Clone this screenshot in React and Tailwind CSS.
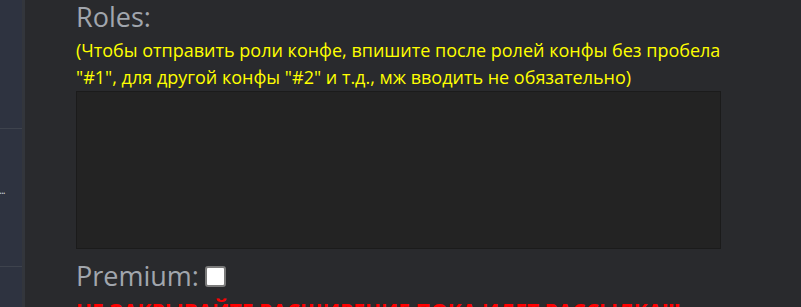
export default function App() {
  return (
    <div
      className="flex h-[307px] w-[801px] overflow-hidden bg-[#292a2d]"
      style={{ fontFamily: '"Open Sans", "Noto Sans", sans-serif' }}
    >
      {/* sidebar edge */}
      <aside className="flex w-[25px] shrink-0 flex-col border-r-[3px] border-[#33363c] bg-[#2e3340]">
        <div className="h-[129px] shrink-0 border-b border-[#3e434d]" />
        <div className="flex h-[138px] shrink-0 items-center border-b border-[#3e434d] pb-[16px]">
          <span className="-ml-[1px] text-[11px] leading-none tracking-[-1px] text-[#c9ced6]">...</span>
        </div>
        <div className="flex-1" />
      </aside>

      <main className="flex flex-col pl-[51px]">
        <h2 className="mt-[4px] shrink-0 text-[27px] leading-[26px] text-[#a1a6ad]">Roles:</h2>
        <p className="mt-[7px] shrink-0 whitespace-nowrap text-[18px] leading-[27px] text-[#ffff00]">
          (Чтобы отправить роли конфе, впишите после ролей конфы без пробела
          <br />
          "#1", для другой конфы "#2" и т.д., мж вводить не обязательно)
        </p>
        <textarea className="h-[158px] w-[645px] shrink-0 resize-none border border-[#1b1b1b] bg-[#232323] text-white outline-none" />
        <label className="mt-[14px] flex shrink-0 items-center gap-[6px] text-[27px] leading-[26px] text-[#a1a6ad]">
          Premium:
          <span className="h-[21px] w-[21px] rounded-[3px] border-2 border-[#7b7b7b] bg-white" />
        </label>
        <p className="mt-[12px] shrink-0 whitespace-nowrap text-[21px] font-bold leading-[20px] text-[#ff0000]">
          НЕ ЗАКРЫВАЙТЕ РАСШИРЕНИЕ ПОКА ИДЕТ РАССЫЛКА!!!
        </p>
      </main>
    </div>
  )
}
